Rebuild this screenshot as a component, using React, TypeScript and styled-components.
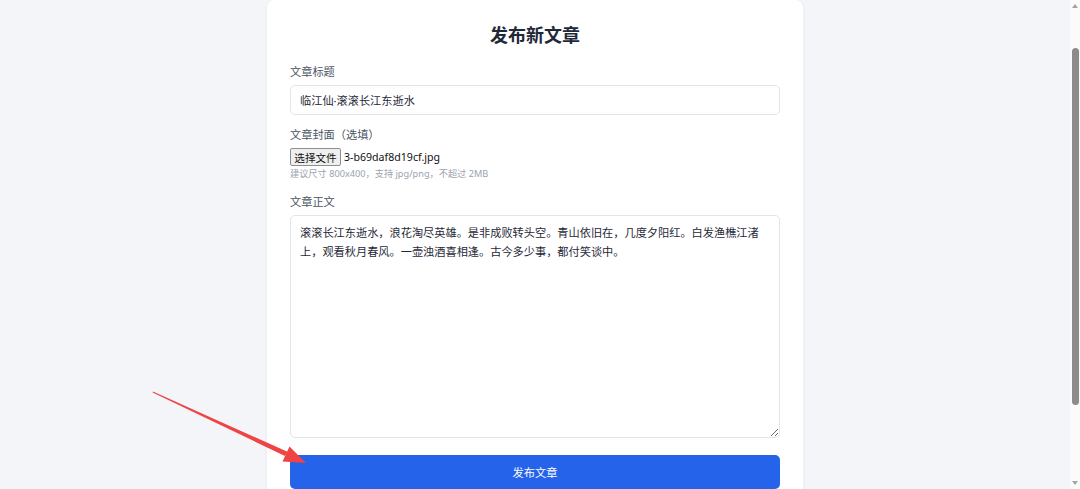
import React from "react";
import styled, { createGlobalStyle } from "styled-components";

const GlobalStyle = createGlobalStyle`
  html, body {
    margin: 0;
    padding: 0;
    height: 489px;
    overflow: hidden;
  }
  body {
    font-family: "Noto Sans", "Noto Sans CJK SC", "Liberation Sans", sans-serif;
    color: #374151;
  }
`;

const articleBody =
  "滚滚长江东逝水，浪花淘尽英雄。是非成败转头空。青山依旧在，几度夕阳红。白发渔樵江渚上，观看秋月春风。一壶浊酒喜相逢。古今多少事，都付笑谈中。";

const App = () => {
  return (
    <>
      <GlobalStyle />
      <Page>
        <Main>
          <Card>
            <Heading>发布新文章</Heading>

            <Field>
              <Label>文章标题</Label>
              <TextInput defaultValue="临江仙·滚滚长江东逝水" />
            </Field>

            <Field>
              <Label>文章封面（选填）</Label>
              <FileRow>
                <FileButton type="button">选择文件</FileButton>
                <FileName>3-b69daf8d19cf.jpg</FileName>
              </FileRow>
              <Hint>建议尺寸 800x400，支持 jpg/png，不超过 2MB</Hint>
            </Field>

            <Field>
              <Label>文章正文</Label>
              <TextArea defaultValue={articleBody} />
            </Field>

            <SubmitButton type="button">发布文章</SubmitButton>
          </Card>
          <Pointer viewBox="0 0 1070 489" aria-hidden>
            <polygon
              points="153,391.5 287.5,451.8 285,456 152.6,392.6"
              fill="#ef4444"
            />
            <polygon points="306,463 289.5,446.5 282.5,461.5" fill="#ef4444" />
          </Pointer>
        </Main>
        <ScrollTrack>
          <ScrollArrow $down={false} />
          <ScrollThumb />
          <ScrollArrow $down />
        </ScrollTrack>
      </Page>
    </>
  );
};

export default App;

const Page = styled.div`
  display: flex;
  height: 489px;
  background: #f3f5f9;
`;

const Main = styled.div`
  position: relative;
  flex: 1;
  display: flex;
  justify-content: center;
  overflow: hidden;
`;

const Card = styled.div`
  width: 536px;
  box-sizing: border-box;
  background: #ffffff;
  border-radius: 8px;
  box-shadow: 0 1px 4px rgba(15, 23, 42, 0.05);
  padding: 21px 23px 0;
  display: flex;
  flex-direction: column;
  height: 520px;
`;

const Heading = styled.h1`
  margin: 0 0 15px;
  text-align: center;
  font-size: 18px;
  line-height: 28px;
  font-weight: 700;
  color: #1f2937;
`;

const Field = styled.div`
  display: flex;
  flex-direction: column;
  margin-bottom: 12px;
`;

const Label = styled.label`
  font-size: 11.2px;
  line-height: 16px;
  color: #4b5563;
  margin-bottom: 5px;
`;

const TextInput = styled.input`
  box-sizing: border-box;
  height: 30px;
  padding: 0 9px;
  border: 1px solid #e1e4e8;
  border-radius: 5px;
  font-family: inherit;
  font-size: 11.2px;
  color: #1f2937;
  outline: none;
`;

const FileRow = styled.div`
  display: flex;
  align-items: center;
  gap: 3px;
  height: 18px;
`;

const FileButton = styled.button`
  box-sizing: border-box;
  height: 18px;
  width: 51px;
  padding: 0;
  border: 1px solid #8f8f8f;
  border-radius: 2px;
  background: #efefef;
  font-family: inherit;
  font-size: 10.6px;
  color: #111;
`;

const FileName = styled.span`
  font-size: 10.6px;
  color: #111;
`;

const Hint = styled.div`
  font-size: 9.2px;
  line-height: 16px;
  color: #9ca3af;
`;

const TextArea = styled.textarea`
  box-sizing: border-box;
  height: 223px;
  padding: 7px 9px;
  border: 1px solid #e1e4e8;
  border-radius: 5px;
  font-family: inherit;
  font-size: 11.2px;
  line-height: 19px;
  color: #1f2937;
  resize: vertical;
  outline: none;
`;

const SubmitButton = styled.button`
  margin-top: 5px;
  height: 34px;
  border: none;
  border-radius: 5px;
  background: #2563eb;
  color: #ffffff;
  font-family: inherit;
  font-size: 11.2px;
`;

const Pointer = styled.svg`
  position: absolute;
  left: 0;
  top: 0;
  width: 1070px;
  height: 489px;
  pointer-events: none;
`;

const ScrollTrack = styled.div`
  width: 10px;
  background: #fbfbfb;
  display: flex;
  flex-direction: column;
  align-items: center;
`;

const ScrollThumb = styled.div`
  width: 7px;
  margin: 40px 0 auto;
  height: 357px;
  border-radius: 4px;
  background: #8c8c8c;
`;

const ScrollArrow = styled.div<{ $down: boolean }>`
  margin-top: ${(p) => (p.$down ? "0" : "4px")};
  margin-bottom: ${(p) => (p.$down ? "4px" : "0")};
  width: 0;
  height: 0;
  border-left: 3px solid transparent;
  border-right: 3px solid transparent;
  ${(p) =>
    p.$down
      ? "border-top: 4px solid #a3a3a3;"
      : "border-bottom: 4px solid #a3a3a3;"}
`;
